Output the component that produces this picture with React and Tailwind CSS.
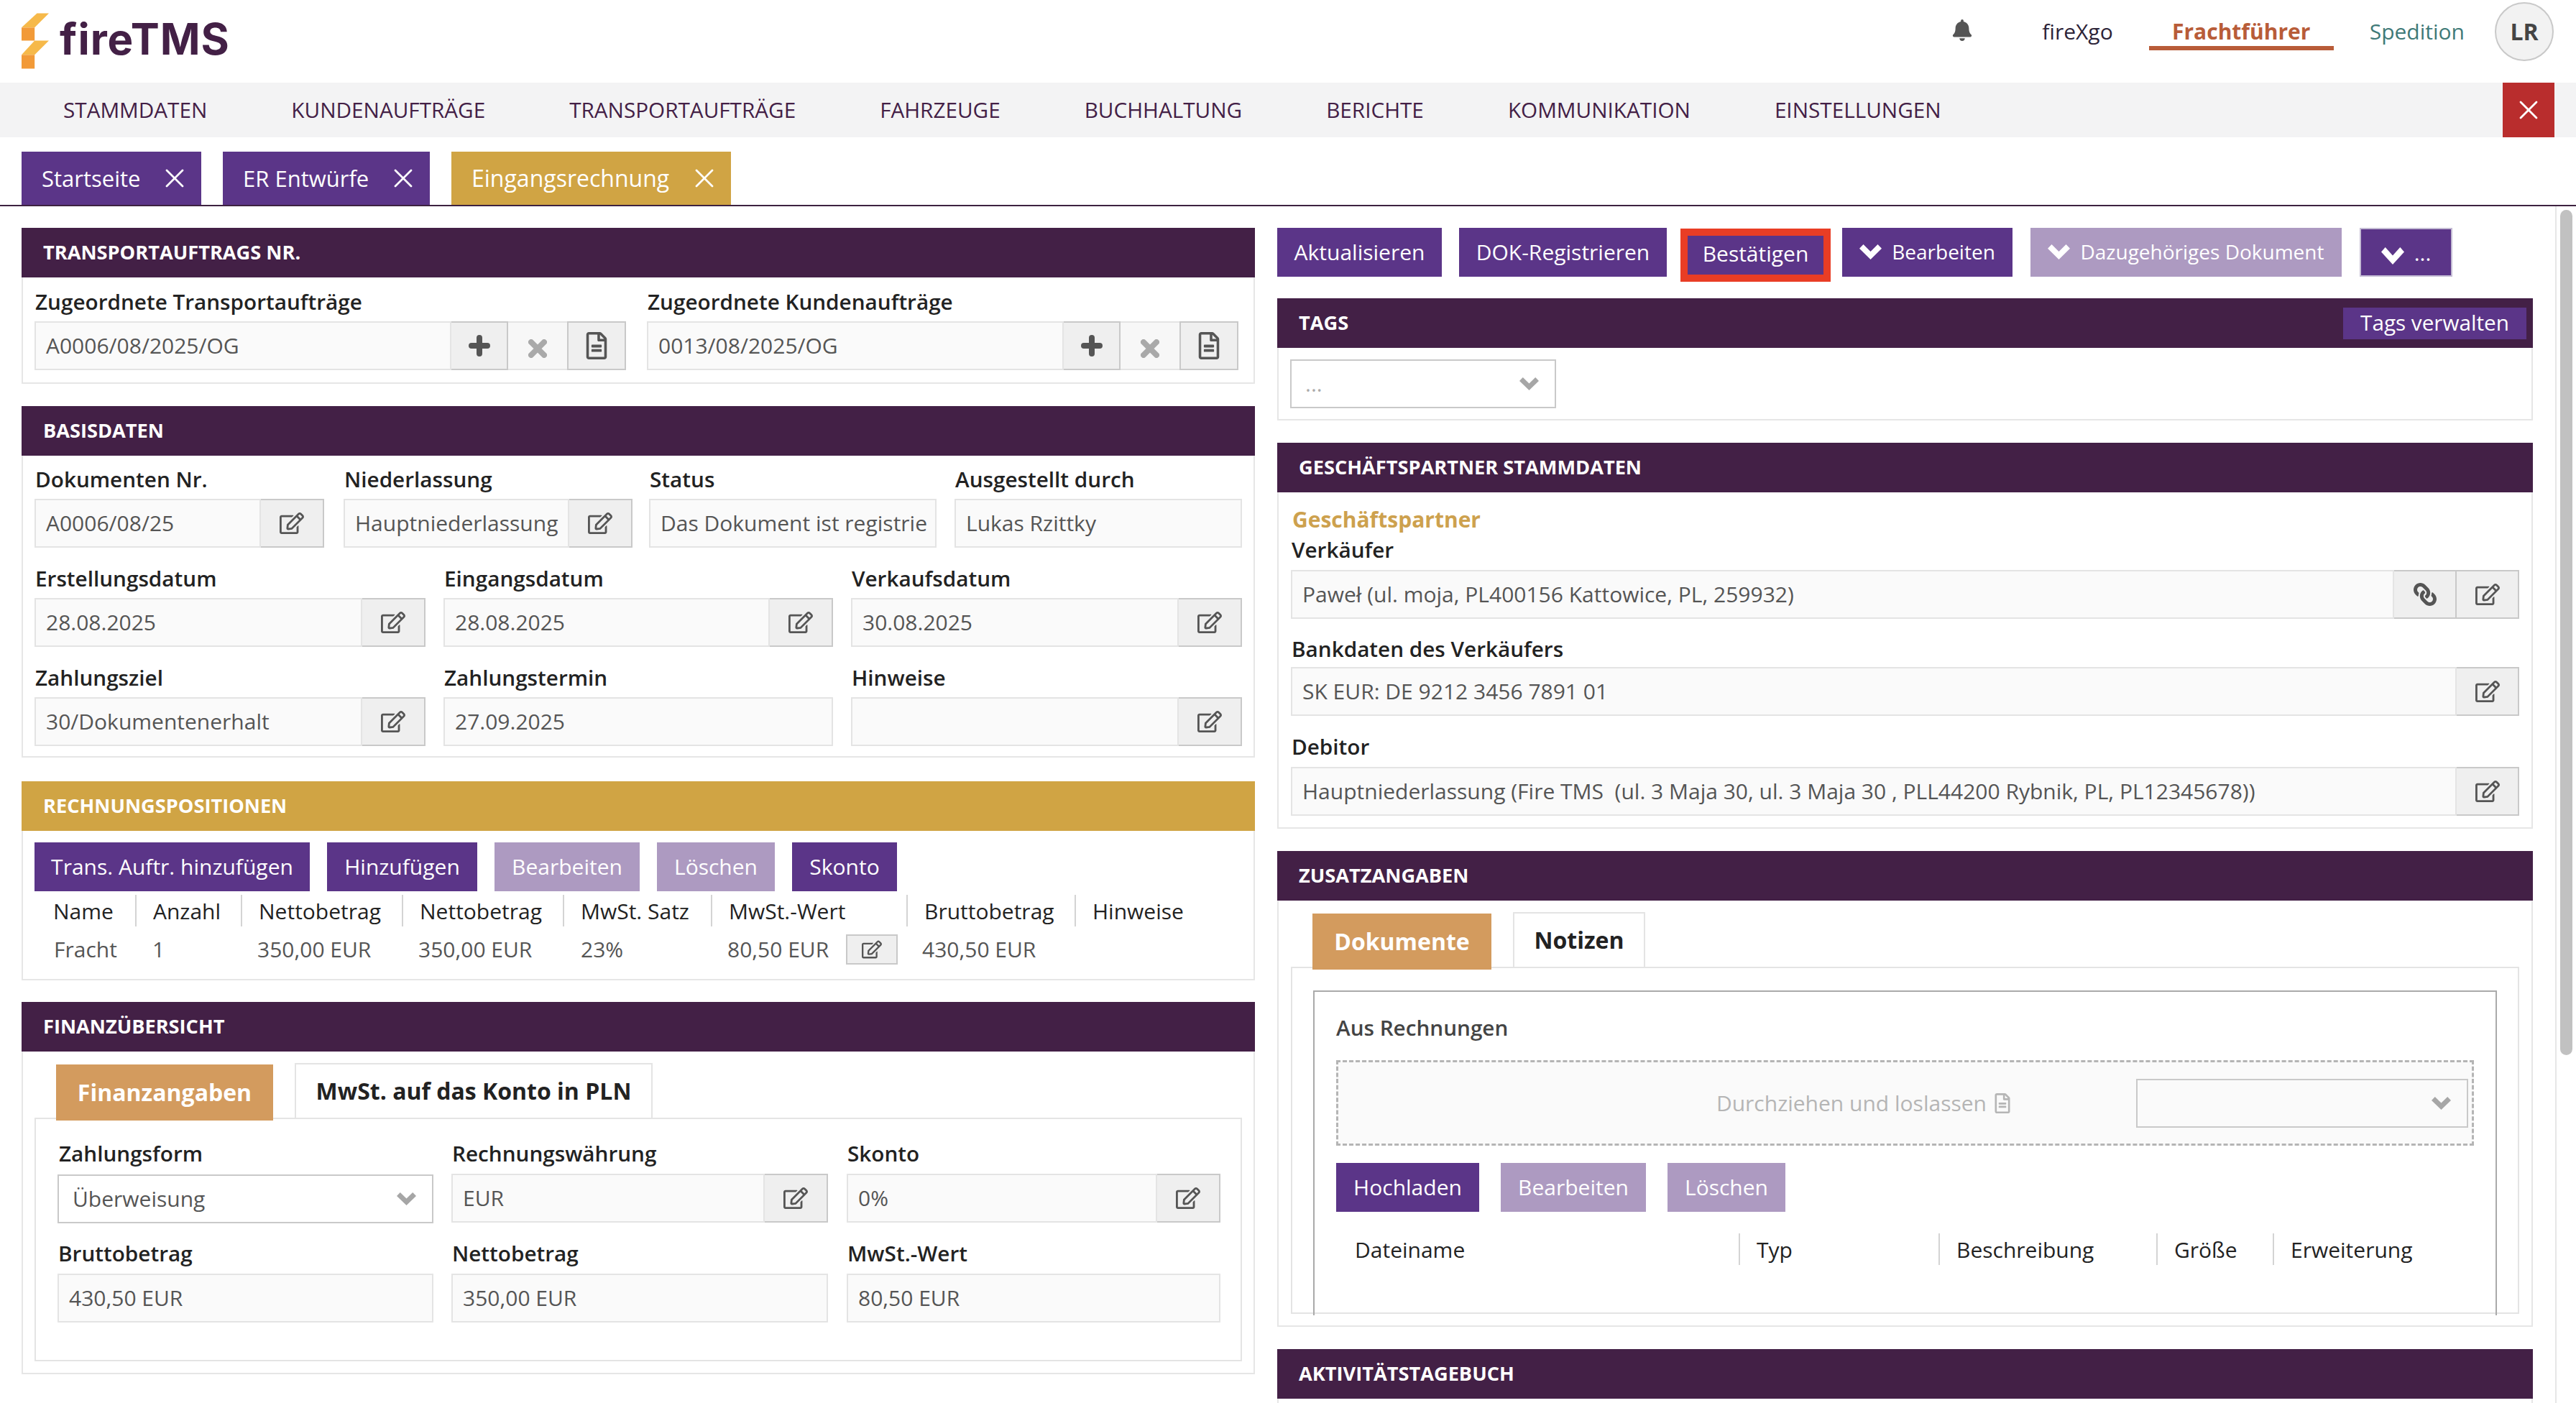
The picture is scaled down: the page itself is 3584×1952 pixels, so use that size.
import React from "react";
import { FaRegEdit, FaRegFileAlt, FaLink, FaBell } from "react-icons/fa";
import { X } from "lucide-react";

const Chevron = ({ w = 27, h = 18, className = "" }) => (
  <svg width={w} height={h} viewBox="0 0 31 20" preserveAspectRatio="none" className={`flex-none ${className}`} fill="currentColor">
    <polygon points="0,5.5 5.5,0 15.5,9.5 25.5,0 31,5.5 15.5,20" />
  </svg>
);

const Plus = () => (
  <svg width="30" height="30" viewBox="0 0 30 30"><path d="M15 4V26M4 15H26" stroke="#555" strokeWidth="8" strokeLinecap="round" /></svg>
);

const Cross = () => (
  <svg width="26" height="26" viewBox="0 0 26 26"><path d="M4 4L22 22M22 4L4 22" stroke="#a9a9a9" strokeWidth="8" strokeLinecap="round" /></svg>
);

const Header = ({ children, gold, right }) => (
  <div className={`h-[69px] flex items-center justify-between pl-[30px] pr-[9px] text-[27.2px] font-bold text-white ${gold ? "bg-[#d0a444]" : "bg-[#432046]"}`}>
    <span>{children}</span>
    {right}
  </div>
);

const Panel = ({ title, gold, right, className = "", bodyClass = "", children }) => (
  <section className={className}>
    <Header gold={gold} right={right}>{title}</Header>
    <div className={`border-2 border-t-0 border-[#e6e6e6] ${bodyClass}`}>{children}</div>
  </section>
);

const Label = ({ children, className = "" }) => (
  <div className={`h-[34px] leading-[34px] pl-[1px] text-[29.7px] font-semibold text-[#222] whitespace-nowrap ${className}`}>{children}</div>
);

const Input = ({ children, className = "" }) => (
  <div className={`h-[68px] min-w-0 flex-1 flex items-center border-2 border-[#e4e4e4] bg-[#fafafa] px-[14px] pb-[2px] text-[30px] text-[#555] whitespace-nowrap overflow-hidden ${className}`}>{children}</div>
);

const IconBtn = ({ children, className = "w-[88px]" }) => (
  <div className={`h-[68px] flex-none flex items-center justify-center border-2 border-l-0 border-[#c9c9c9] bg-[#efefef] text-[#555] ${className}`}>{children}</div>
);

const Edit = () => <IconBtn><FaRegEdit size={34} /></IconBtn>;

const Field = ({ label, value, edit, className = "" }) => (
  <div className={`flex-none ${className}`}>
    <Label>{label}</Label>
    <div className="flex mt-[10px]">
      <Input>{value}</Input>
      {edit && <Edit />}
    </div>
  </div>
);

const Select = ({ children, className = "", muted }) => (
  <div className={`flex-none h-[68px] flex items-center justify-between border-2 border-[#c9c9c9] pl-[19px] pr-[22px] text-[30px] ${muted ? "text-[#aaa]" : "text-[#555]"} ${className}`}>
    <span className="pb-[2px]">{children}</span>
    <Chevron className="text-[#a6a6a6]" />
  </div>
);

const Btn = ({ children, light, className = "" }) => (
  <div className={`h-[68px] flex-none flex items-center justify-center pb-[2px] text-white whitespace-nowrap ${light ? "bg-[#ad9ac1]" : "bg-[#5b3588]"} ${className}`}>{children}</div>
);

const Tab = ({ children, gold, className = "" }) => (
  <div className={`h-[74px] flex items-center justify-between pl-[28px] pr-[15px] text-white ${gold ? "bg-[#d0a444] text-[32px]" : "bg-[#5b3588] text-[31px]"} ${className}`}>
    <span>{children}</span>
    <X size={44} strokeWidth={1.5} />
  </div>
);

const TH = ({ children, first }) => (
  <div className={`h-[44px] flex items-center text-[30px] text-[#222] whitespace-nowrap ${first ? "pl-[26px]" : "pl-[23px] border-l-2 border-[#d4d4d4]"}`}>{children}</div>
);

const nav = ["STAMMDATEN", "KUNDENAUFTRÄGE", "TRANSPORTAUFTRÄGE", "FAHRZEUGE", "BUCHHALTUNG", "BERICHTE", "KOMMUNIKATION", "EINSTELLUNGEN"];
const inv = ["Name", "Anzahl", "Nettobetrag", "Nettobetrag", "MwSt. Satz", "MwSt.-Wert", "Bruttobetrag", "Hinweise"];
const docs = ["Dateiname", "Typ", "Beschreibung", "Größe", "Erweiterung"];

function Logo() {
  return (
    <div className="flex items-center">
      <svg width="38" height="78" viewBox="30 25 115 233">
        <polygon points="95,25 145,25 85,85 30,85" fill="#f6b94a" />
        <rect x="30" y="85" width="55" height="55" fill="#f29a38" />
        <polygon points="85,140 145,140 85,200 30,200" fill="#f6b94a" />
        <rect x="30" y="200" width="55" height="58" fill="#f29a38" />
      </svg>
      <span className="ml-[15px] mb-[6px] text-[60px] tracking-[1px] leading-none font-bold text-[#432046] font-['Inter',sans-serif]">fireTMS</span>
    </div>
  );
}

export default function App() {
  return (
    <div className="w-[3584px] h-[1952px] overflow-hidden bg-white font-['Open_Sans',sans-serif]">
      <header className="h-[115px] flex items-start justify-between pl-[30px] pr-[31px]">
        <div className="mt-[18px]"><Logo /></div>
        <div className="mt-[3px] h-[82px] flex items-center text-[30px]">
          <FaBell size={30} className="text-[#555] -mt-[4px]" />
          <span className="ml-[96px] pb-[2px] text-[#2d2438]">fireXgo</span>
          <span className="ml-[50px] w-[257px] h-[52px] flex items-center justify-center border-b-[6px] border-[#b85c38] pt-[4px] font-bold text-[#b85c38]">Frachtführer</span>
          <span className="ml-[50px] pb-[2px] text-[#3f7a78]">Spedition</span>
          <span className="ml-[42px] w-[82px] h-[82px] rounded-full border-2 border-[#c9c9c9] bg-[#f2f2f2] flex items-center justify-center text-[32px] font-bold text-[#444]">LR</span>
        </div>
      </header>

      <nav className="h-[76px] bg-[#f3f3f4] flex items-center justify-between pl-[88px] pr-[30px]">
        <div className="flex gap-[117px] text-[29.7px] text-[#432046]">
          {nav.map((n) => <span key={n}>{n}</span>)}
        </div>
        <div className="w-[72px] h-[76px] bg-[#b92d2d] text-white flex items-center justify-center"><X size={44} strokeWidth={1.5} /></div>
      </nav>

      <div className="h-[96px] pt-[20px] pl-[30px] flex gap-[30px] border-b-2 border-[#3d2240] items-start">
        <Tab className="w-[250px]">Startseite</Tab>
        <Tab className="w-[288px]">ER Entwürfe</Tab>
        <Tab gold className="w-[389px]">Eingangsrechnung</Tab>
      </div>

      <main className="flex">
        <div className="ml-[30px] w-[1716px] flex-none pt-[30px]">
          <Panel title="TRANSPORTAUFTRAGS NR." bodyClass="flex gap-[29px] px-[16px] pt-[17px] pb-[17px]">
            {["A0006/08/2025/OG", "0013/08/2025/OG"].map((v, i) => (
              <div key={i} className="w-[823px] flex-none">
                <Label>{i ? "Zugeordnete Kundenaufträge" : "Zugeordnete Transportaufträge"}</Label>
                <div className="flex mt-[10px]">
                  <Input>{v}</Input>
                  <IconBtn className="w-[79px]"><Plus /></IconBtn>
                  <div className="w-[82px] h-[68px] flex-none flex items-center justify-center border-y-2 border-[#e4e4e4] bg-[#f7f7f7] pt-[8px]"><Cross /></div>
                  <IconBtn className="w-[82px] border-l-2"><FaRegFileAlt size={38} /></IconBtn>
                </div>
              </div>
            ))}
          </Panel>

          <Panel title="BASISDATEN" className="mt-[31px]" bodyClass="px-[16px] pt-[16px] pb-[14px]">
            <div className="flex">
              <Field label="Dokumenten Nr." value="A0006/08/25" edit className="w-[403px]" />
              <Field label="Niederlassung" value="Hauptniederlassung" edit className="ml-[27px] w-[402px]" />
              <Field label="Status" value="Das Dokument ist registrie" className="ml-[23px] w-[400px]" />
              <Field label="Ausgestellt durch" value="Lukas Rzittky" className="ml-[25px] w-[400px]" />
            </div>
            <div className="flex mt-[26px]">
              <Field label="Erstellungsdatum" value="28.08.2025" edit className="w-[544px]" />
              <Field label="Eingangsdatum" value="28.08.2025" edit className="ml-[25px] w-[542px]" />
              <Field label="Verkaufsdatum" value="30.08.2025" edit className="ml-[25px] w-[544px]" />
            </div>
            <div className="flex mt-[26px]">
              <Field label="Zahlungsziel" value="30/Dokumentenerhalt" edit className="w-[544px]" />
              <Field label="Zahlungstermin" value="27.09.2025" className="ml-[25px] w-[542px]" />
              <Field label="Hinweise" value="" edit className="ml-[25px] w-[544px]" />
            </div>
          </Panel>

          <Panel title="RECHNUNGSPOSITIONEN" gold className="mt-[33px]" bodyClass="pt-[16px] px-[16px] h-[208px]">
            <div className="flex gap-[24px] text-[30px]">
              <Btn className="w-[383px]">Trans. Auftr. hinzufügen</Btn>
              <Btn className="w-[209px]">Hinzufügen</Btn>
              <Btn light className="w-[202px]">Bearbeiten</Btn>
              <Btn light className="w-[164px]">Löschen</Btn>
              <Btn className="w-[146px]">Skonto</Btn>
            </div>
            <div className="grid grid-cols-[140px_147px_224px_224px_206px_272px_234px_1fr] mt-[5px]">
              {inv.map((h, i) => <TH key={i} first={i === 0}>{h}</TH>)}
            </div>
            <div className="grid grid-cols-[140px_147px_224px_224px_206px_272px_234px_1fr] mt-[9px] h-[44px] items-center text-[30px] text-[#555] whitespace-nowrap">
              <span className="pl-[27px]">Fracht</span>
              <span className="pl-[24px]">1</span>
              <span className="pl-[23px]">350,00 EUR</span>
              <span className="pl-[23px]">350,00 EUR</span>
              <span className="pl-[25px]">23%</span>
              <div className="flex items-center pl-[23px]">
                <span>80,50 EUR</span>
                <div className="ml-[24px] w-[72px] h-[42px] flex-none border-2 border-[#c9c9c9] bg-[#efefef] flex items-center justify-center"><FaRegEdit size={28} /></div>
              </div>
              <span className="pl-[22px]">430,50 EUR</span>
              <span />
            </div>
          </Panel>

          <Panel title="FINANZÜBERSICHT" className="mt-[30px]" bodyClass="pt-[16px] px-[16px] pb-[16px]">
            <div className="flex items-start ml-[30px] h-[76px]">
              <div className="w-[302px] h-[78px] bg-[#d39b5e] flex items-center justify-center text-[32px] font-bold text-white relative z-10 mt-[2px]">Finanzangaben</div>
              <div className="ml-[30px] w-[498px] h-[76px] border-2 border-b-0 border-[#e4e4e4] flex items-center justify-center text-[32px] font-bold text-[#222]">MwSt. auf das Konto in PLN</div>
            </div>
            <div className="border-2 border-[#e4e4e4] h-[339px] pt-[31px] pl-[30px]">
              <div className="flex">
                <div className="w-[523px] flex-none">
                  <Label className="ml-[1px]">Zahlungsform</Label>
                  <Select className="mt-[12px]">Überweisung</Select>
                </div>
                <Field label="Rechnungswährung" value="EUR" edit className="ml-[25px] w-[524px] [&>div:last-child]:mt-[11px]" />
                <Field label="Skonto" value="0%" edit className="ml-[26px] w-[520px] [&>div:last-child]:mt-[11px]" />
              </div>
              <div className="flex mt-[25px]">
                <Field label="Bruttobetrag" value="430,50 EUR" className="w-[523px] [&>div:last-child]:mt-[11px]" />
                <Field label="Nettobetrag" value="350,00 EUR" className="ml-[25px] w-[524px] [&>div:last-child]:mt-[11px]" />
                <Field label="MwSt.-Wert" value="80,50 EUR" className="ml-[26px] w-[520px] [&>div:last-child]:mt-[11px]" />
              </div>
            </div>
          </Panel>
        </div>

        <div className="ml-[31px] w-[1747px] flex-none pt-[30px]">
          <div className="h-[68px] flex items-start text-[30px]">
            <Btn className="w-[229px]">Aktualisieren</Btn>
            <Btn className="ml-[24px] w-[289px]">DOK-Registrieren</Btn>
            <div className="ml-[19px] mt-[1px] w-[209px] h-[74px] flex-none border-[10px] border-[#e93d25] bg-[#5b3588] flex items-center justify-center pb-[6px] text-white">Bestätigen</div>
            <Btn className="ml-[16px] w-[237px] text-[28px]"><Chevron w={31} h={21} className="mr-[14px]" />Bearbeiten</Btn>
            <Btn light className="ml-[25px] w-[433px] text-[28px]"><Chevron w={31} h={21} className="mr-[14px]" />Dazugehöriges Dokument</Btn>
            <div className="ml-[25px] w-[129px] h-[68px] flex-none border-2 border-[#c4bcd4] bg-[#5b3588] flex items-center justify-center text-white"><Chevron w={32} h={24} className="mr-[14px] mt-[10px]" />...</div>
          </div>

          <Panel
            title="TAGS"
            className="mt-[30px]"
            bodyClass="h-[101px] pt-[16px] pl-[16px]"
            right={<div className="w-[255px] h-[44px] bg-[#5b3588] flex items-center justify-center text-[29.7px] font-normal">Tags verwalten</div>}
          >
            <Select muted className="w-[370px]">...</Select>
          </Panel>

          <Panel title="GESCHÄFTSPARTNER STAMMDATEN" className="mt-[31px]" bodyClass="px-[17px] pt-[20px] h-[468px]">
            <div className="h-[36px] leading-[36px] pl-[2px] text-[30px] font-bold text-[#cda14e]">Geschäftspartner</div>
            <Label className="mt-[7px]">Verkäufer</Label>
            <div className="flex mt-[11px]">
              <Input>Paweł (ul. moja, PL400156 Kattowice, PL, 259932)</Input>
              <IconBtn className="w-[87px]"><FaLink size={32} className="-scale-x-100" /></IconBtn>
              <IconBtn className="w-[87px]"><FaRegEdit size={34} /></IconBtn>
            </div>
            <Label className="mt-[25px]">Bankdaten des Verkäufers</Label>
            <div className="flex mt-[8px]">
              <Input>SK EUR: DE 9212 3456 7891 01</Input>
              <IconBtn className="w-[87px]"><FaRegEdit size={34} /></IconBtn>
            </div>
            <Label className="mt-[26px]">Debitor</Label>
            <div className="flex mt-[11px]">
              <Input>Hauptniederlassung (Fire TMS&nbsp; (ul. 3 Maja 30, ul. 3 Maja 30 , PLL44200 Rybnik, PL, PL12345678))</Input>
              <IconBtn className="w-[87px]"><FaRegEdit size={34} /></IconBtn>
            </div>
          </Panel>

          <Panel title="ZUSATZANGABEN" className="mt-[31px]" bodyClass="pt-[16px] px-[17px] pb-[16px]">
            <div className="flex items-start ml-[30px] h-[76px]">
              <div className="w-[249px] h-[78px] bg-[#d39b5e] flex items-center justify-center text-[32px] font-bold text-white relative z-10 mt-[2px]">Dokumente</div>
              <div className="ml-[30px] w-[184px] h-[76px] border-2 border-b-0 border-[#e4e4e4] flex items-center justify-center text-[32px] font-bold text-[#222]">Notizen</div>
            </div>
            <div className="border-2 border-[#e4e4e4] h-[483px] pt-[31px] pl-[29px] pr-[29px]">
              <div className="h-[452px] border-2 border-b-0 border-[#aaaaaa] pl-[30px] pr-[30px]">
                <div className="h-[34px] leading-[34px] mt-[33px] text-[29.7px] font-semibold text-[#444]">Aus Rechnungen</div>
                <div className="mt-[28px] h-[119px] border-[3px] border-dashed border-[#b5b5b5] bg-[#fafafa] flex items-center justify-end pr-[5px]">
                  <span className="text-[30px] text-[#b5b5b5] mr-[172px] flex items-center">Durchziehen und loslassen<FaRegFileAlt size={28} className="ml-[8px]" /></span>
                  <Select className="w-[462px] h-[66px]">&nbsp;</Select>
                </div>
                <div className="flex gap-[30px] mt-[24px] text-[30px]">
                  <Btn className="w-[199px]">Hochladen</Btn>
                  <Btn light className="w-[202px]">Bearbeiten</Btn>
                  <Btn light className="w-[164px]">Löschen</Btn>
                </div>
                <div className="grid grid-cols-[560px_278px_303px_162px_1fr] mt-[30px]">
                  {docs.map((h, i) => <TH key={h} first={i === 0}>{h}</TH>)}
                </div>
              </div>
            </div>
          </Panel>

          <Panel title="AKTIVITÄTSTAGEBUCH" className="mt-[31px]" bodyClass="h-[10px]" />
        </div>

        <div className="ml-[31px] flex-none w-[29px] h-[1665px] border-l-2 border-[#e6e6e6] pl-[5px] pt-[5px]">
          <div className="w-[17px] h-[1176px] rounded-full bg-[#c1c1c1]" />
        </div>
      </main>
    </div>
  );
}
